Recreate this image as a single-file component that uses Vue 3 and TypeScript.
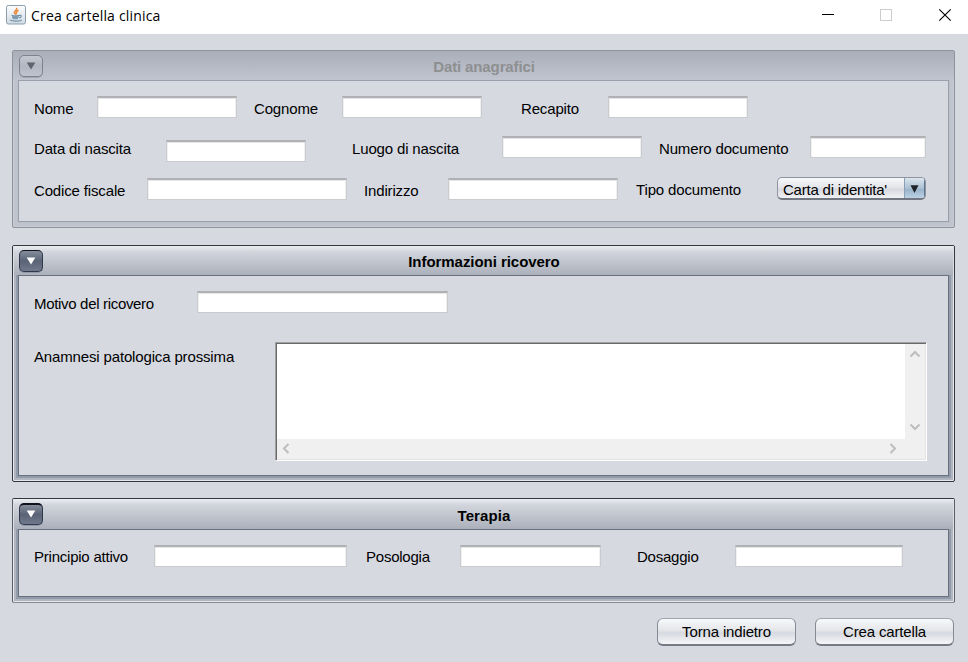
<script setup lang="ts">
import { reactive } from 'vue'

const form = reactive({
  nome: '', cognome: '', recapito: '',
  dataNascita: '', luogoNascita: '', numeroDocumento: '',
  codiceFiscale: '', indirizzo: '', tipoDocumento: "Carta di identita'",
  motivo: '', anamnesi: '',
  principio: '', posologia: '', dosaggio: '',
})
</script>

<template>
  <div class="window">
    <header class="titlebar">
      <svg class="java" width="20" height="20" viewBox="0 0 20 20">
        <defs>
          <linearGradient id="tile" x1="0" y1="0" x2="0" y2="1">
            <stop offset="0" stop-color="#fdfdfd" />
            <stop offset="1" stop-color="#cfdbe4" />
          </linearGradient>
        </defs>
        <rect x=".5" y=".5" width="19" height="18.5" rx="1.8" fill="url(#tile)" stroke="#8d9da9" />
        <path d="M10.8 2.8C11.6 5 7.4 6 8.4 8.2L9.7 9.6M12.5 5.2C9.2 6.7 10.5 7.6 10.3 9.3" fill="none" stroke="#e98a3c" stroke-width="1.5" />
        <path d="M5.5 10.3Q9 11.5 13 10.2M6.3 12.4Q9 13.3 12.3 12.4M13 10.5C16 9.6 15.8 12.3 13 13M4 14.9C6 16.6 13 16.6 15.7 14.9" fill="none" stroke="#6f90a6" stroke-width="1.2" />
        <path d="M6 11H12.8L11.8 14.3H7Z" fill="#7f9db0" />
      </svg>
      <span class="caption">Crea cartella clinica</span>
      <svg class="controls" width="132" height="14" viewBox="0 0 132 14" fill="none" shape-rendering="crispEdges">
        <path d="M0 6.5H12" stroke="#000" />
        <rect x="58.5" y="1.5" width="11" height="11" stroke="#ccc" />
        <path d="M117.3 1.3L128.7 12.7M128.7 1.3L117.3 12.7" stroke="#000" stroke-width="1.15" shape-rendering="auto" />
      </svg>
    </header>

    <main class="body">
      <section class="panel inactive anagrafici">
        <div class="head">
          <button class="toggle"><svg width="10" height="8" viewBox="0 0 10 8"><path d="M.7 .5H9.3L5 7.5Z" /></svg></button>
          <h2>Dati anagrafici</h2>
        </div>
        <div class="content">
          <div class="row r1">
            <label>Nome</label><input v-model="form.nome" class="w140" />
            <label>Cognome</label><input v-model="form.cognome" class="w140" />
            <label>Recapito</label><input v-model="form.recapito" class="w140" />
          </div>
          <div class="row r2">
            <label>Data di nascita</label><input v-model="form.dataNascita" class="w140 low" />
            <label>Luogo di nascita</label><input v-model="form.luogoNascita" class="w140" />
            <label>Numero documento</label><input v-model="form.numeroDocumento" class="w116" />
          </div>
          <div class="row r3">
            <label>Codice fiscale</label><input v-model="form.codiceFiscale" class="w200" />
            <label>Indirizzo</label><input v-model="form.indirizzo" class="w170" />
            <label class="high">Tipo documento</label>
            <div class="combo">
              <span class="value">{{ form.tipoDocumento }}</span>
              <span class="arrow"><svg width="9" height="8" viewBox="0 0 9 8"><path d="M.5 .3H8.5L4.5 7.9Z" /></svg></span>
            </div>
          </div>
        </div>
      </section>

      <section class="panel ricovero">
        <div class="head">
          <button class="toggle"><svg width="10" height="8" viewBox="0 0 10 8"><path d="M.7 .5H9.3L5 7.5Z" /></svg></button>
          <h2>Informazioni ricovero</h2>
        </div>
        <div class="content">
          <div class="row r4">
            <label>Motivo del ricovero</label><input v-model="form.motivo" class="w251" />
          </div>
          <div class="row r5">
            <label>Anamnesi patologica prossima</label>
            <div class="scroll">
              <textarea v-model="form.anamnesi"></textarea>
              <div class="vbar">
                <svg width="12" height="8" viewBox="0 0 12 8"><path d="M1.5 6.5L6 2L10.5 6.5" /></svg>
                <svg width="12" height="8" viewBox="0 0 12 8"><path d="M1.5 1.5L6 6L10.5 1.5" /></svg>
              </div>
              <div class="hbar">
                <svg width="8" height="11" viewBox="0 0 8 11"><path d="M6.5 1L2 5.5L6.5 10" /></svg>
                <svg width="8" height="11" viewBox="0 0 8 11"><path d="M1.5 1L6 5.5L1.5 10" /></svg>
              </div>
            </div>
          </div>
        </div>
      </section>

      <section class="panel terapia">
        <div class="head">
          <button class="toggle"><svg width="10" height="8" viewBox="0 0 10 8"><path d="M.7 .5H9.3L5 7.5Z" /></svg></button>
          <h2>Terapia</h2>
        </div>
        <div class="content">
          <div class="row r6">
            <label>Principio attivo</label><input v-model="form.principio" class="w193" />
            <label>Posologia</label><input v-model="form.posologia" class="w141" />
            <label>Dosaggio</label><input v-model="form.dosaggio" class="w168" />
          </div>
        </div>
      </section>

      <footer class="actions">
        <button class="action">Torna indietro</button>
        <button class="action">Crea cartella</button>
      </footer>
    </main>
  </div>
</template>

<style>
body { background: #d6d9e0; }
</style>

<style scoped>
* { box-sizing: border-box; }
.window {
  width: 968px; height: 662px; overflow: hidden; background: #d6d9e0; color: #000;
  font-family: "Liberation Sans", Arial, sans-serif; font-size: 15px;
}
.titlebar { display: flex; height: 34px; padding: 5px 14px 0 6px; background: #fff; }
.caption { margin-left: 5px; font: 14px/21px "Open Sans", "Noto Sans", sans-serif; letter-spacing: 0.18px; white-space: nowrap; }
.controls { margin: 3px 0 0 auto; }
.body { padding: 16px 13px 0 12px; }

.panel {
  display: flex; flex-direction: column; padding: 0 5px 5px; border: 1px solid #34373d; border-radius: 2px;
  background: #b0b5c0; box-shadow: inset 0 0 0 1px #e6e8ec;
}
.anagrafici { height: 178px; }
.ricovero { height: 237px; margin-top: 17px; }
.terapia { height: 105px; margin-top: 16px; border-color: #34373d #5b5e65 #85888e; }
.head {
  position: relative; display: flex; align-items: flex-start; height: 29px; flex: none; margin: 0 -5px;
  padding: 4px 6px 0; border-radius: 1px 1px 0 0; box-shadow: inset 1px 0 #dcdfe4, inset -1px 0 #dcdfe4;
  background: linear-gradient(#eceef1 0, #d2d5dc 20%, #c4c8d0 48%, #abb0bb 100%);
}
.terapia .head { height: 30px; }
h2 {
  flex: 1; margin: 3px 24px 0 1px; font-size: 15px; line-height: 18px; font-weight: bold;
  letter-spacing: -0.05px; text-align: center;
}
.terapia h2 { margin-top: 4px; letter-spacing: 0.1px; }
.toggle {
  display: flex; align-items: center; justify-content: center; width: 24px; height: 22px; padding: 0 0 1px;
  border: 1px solid #30384a; border-top: 1px solid #10131c; border-radius: 5px;
  background: linear-gradient(#858d9c, #5a6476 50%, #6f798b); box-shadow: 0 1px 0 #9299a6;
}
.terapia .toggle { border-top-width: 2px; }
.toggle path { fill: #fff; }
.content {
  flex: 1; border: 1px solid #697080; background: #d6d9e0; padding: 0 0 0 15px;
  box-shadow: 0 0 0 2px #929baa;
}
.inactive { border-color: #8e939e; background: #c0c4cd; box-shadow: inset 0 0 0 1px #c8cbd3; }
.inactive .head { background: linear-gradient(#a9aeb8, #c0c4ce); box-shadow: none; }
.inactive .content { border-color: #999fab; box-shadow: 0 0 0 1px #bbc0c9; }
.inactive h2 { color: #8e8f91; letter-spacing: -0.12px; }
.inactive .toggle {
  border: 1px solid #7d828c; background: linear-gradient(#c4c8d1, #b1b6c0 50%, #c0c4ce); box-shadow: 0 1px 0 #a2a7b0;
}
.inactive .toggle path { fill: #5e636d; }

.row { display: grid; align-items: start; }
.r1 { height: 41px; margin-top: 15px; grid-template-columns: 63px 157px 88px 179px 87px 140px; }
.r2 { height: 41px; grid-template-columns: 132px 186px 150px 157px 151px 116px; margin-top: -1px; }
.r3 { grid-template-columns: 113px 217px 84px 188px 141px 149px; margin-top: 1px; }
.r4 { height: 51px; margin-top: 15px; grid-template-columns: 163px 251px; }
.r5 { grid-template-columns: 241px 652px; }
.r6 { margin-top: 15px; grid-template-columns: 120px 212px 94px 177px 98px 168px; }
label { margin-top: 4px; line-height: 18px; white-space: nowrap; letter-spacing: -0.15px; }
.high { margin-top: 3px; }
.low { margin-top: 4px; }
.r4 label { letter-spacing: -0.32px; }
.r5 label { margin-top: 6px; }
.r6 label { margin-top: 3px; letter-spacing: -0.23px; }
input {
  height: 22px; margin: 0; padding: 2px 5px; outline: none; border-radius: 0; background: #fff; font: inherit;
  border: 1px solid #c9cbce; border-top: 2px solid #b0b1b4; box-shadow: inset 0 1px 0 #e6e6e6, inset 1px 0 0 #f1f1f1, inset -1px 0 0 #f1f1f1;
}
.w116 { width: 116px; }
.w140 { width: 140px; }
.w141 { width: 141px; }
.w168 { width: 168px; }
.w170 { width: 170px; }
.w193 { width: 193px; }
.w200 { width: 200px; }
.w251 { width: 251px; }
.combo {
  display: flex; height: 23px; margin-top: -1px; overflow: hidden; border: 1px solid #8f949f;
  border-bottom: 2px solid #717681; border-radius: 5px; background: linear-gradient(#f7f8fa, #e2e4e9 50%, #d6d9df 55%, #eff0f4);
}
.value { flex: 1; padding-left: 5px; line-height: 23px; letter-spacing: -0.22px; white-space: nowrap; }
.arrow {
  display: flex; align-items: center; justify-content: center; width: 22px; height: 21px; margin-right: -1px; border-left: 1px solid #8ba0b5;
  border-right: 2px solid #587590; background: linear-gradient(#dbe5ed, #a9bfd2 50%, #9bb4ca 55%, #bfd4e7);
}
.arrow path { fill: #202328; }

.scroll {
  display: grid; grid-template-columns: 1fr 20px; grid-template-rows: 1fr 20px; height: 119px;
  border-style: solid; border-width: 1px; border-color: #a0a0a0 #fff #fff #a0a0a0; background: #f0f0f0;
  box-shadow: inset 1px 1px 0 #696969, inset -1px -1px 0 #e3e3e3; padding: 1px;
}
textarea { width: 100%; height: 100%; padding: 3px; border: 0; outline: none; resize: none; background: #fff; font: inherit; }
.scroll path { fill: none; stroke: #bdbdbd; stroke-width: 2; }
.vbar { display: flex; flex-direction: column; align-items: center; justify-content: space-between; padding: 6px 1px 8px 0; background: #f0f0f0; }
.hbar { display: flex; align-items: center; justify-content: space-between; padding: 0 8px 1px 5px; background: #f0f0f0; }

.actions { display: flex; justify-content: flex-end; gap: 19px; margin: 15px 1px 0 0; }
.action {
  width: 139px; height: 28px; padding: 0; color: #000; font: inherit; letter-spacing: -0.15px; border: 1px solid #858a94; border-top-color: #a2a5ad;
  border-bottom: 2px solid #757a85; border-radius: 6px; background: linear-gradient(#f7f8fa, #e4e6ea 45%, #d6d9df 55%, #f5f6fa);
}
</style>
